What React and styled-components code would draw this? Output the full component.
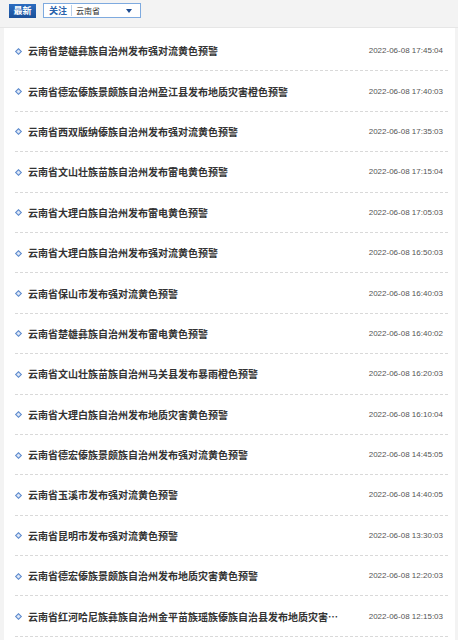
import React from "react";
import styled, { createGlobalStyle } from "styled-components";

const GlobalStyle = createGlobalStyle`
  html, body {
    margin: 0;
    padding: 0;
    background: #f3f3f3;
  }
  body {
    font-family: "Noto Sans CJK SC", "Liberation Sans", sans-serif;
  }
`;

const items = [
  ["云南省楚雄彝族自治州发布强对流黄色预警", "17:45:04"],
  ["云南省德宏傣族景颇族自治州盈江县发布地质灾害橙色预警", "17:40:03"],
  ["云南省西双版纳傣族自治州发布强对流黄色预警", "17:35:03"],
  ["云南省文山壮族苗族自治州发布雷电黄色预警", "17:15:04"],
  ["云南省大理白族自治州发布雷电黄色预警", "17:05:03"],
  ["云南省大理白族自治州发布强对流黄色预警", "16:50:03"],
  ["云南省保山市发布强对流黄色预警", "16:40:03"],
  ["云南省楚雄彝族自治州发布雷电黄色预警", "16:40:02"],
  ["云南省文山壮族苗族自治州马关县发布暴雨橙色预警", "16:20:03"],
  ["云南省大理白族自治州发布地质灾害黄色预警", "16:10:04"],
  ["云南省德宏傣族景颇族自治州发布强对流黄色预警", "14:45:05"],
  ["云南省玉溪市发布强对流黄色预警", "14:40:05"],
  ["云南省昆明市发布强对流黄色预警", "13:30:03"],
  ["云南省德宏傣族景颇族自治州发布地质灾害黄色预警", "12:20:03"],
  ["云南省红河哈尼族彝族自治州金平苗族瑶族傣族自治县发布地质灾害橙色预警", "12:15:03"],
];

const App = () => {
  return (
    <React.Fragment>
      <GlobalStyle />
      <Page>
        <Toolbar>
          <NewButton>最新</NewButton>
          <Select>
            <SelectLabel>关注</SelectLabel>
            <SelectValue>云南省</SelectValue>
            <Arrow />
          </Select>
        </Toolbar>
        <Panel>
          <List>
            {items.map(([title, time], i) => (
              <Row key={i}>
                <Bullet />
                <Title title={title}>{title}</Title>
                <Time>2022-06-08 {time}</Time>
              </Row>
            ))}
          </List>
        </Panel>
      </Page>
    </React.Fragment>
  );
};

export default App;

const Page = styled.div`
  width: 458px;
  height: 640px;
  overflow: hidden;
`;

const Toolbar = styled.div`
  height: 28px;
  display: flex;
  align-items: flex-start;
  gap: 7px;
  padding: 4px 0 0 9px;
  box-sizing: border-box;
  border-bottom: 1px solid #e6e6e6;
`;

const NewButton = styled.div`
  width: 27px;
  height: 14px;
  background: linear-gradient(#2b6cc0, #1a4f99);
  color: #fff;
  font-size: 9px;
  font-weight: 700;
  line-height: 14px;
  text-align: center;
`;

const Select = styled.div`
  width: 98px;
  height: 15px;
  margin-top: -1px;
  box-sizing: border-box;
  border: 1px solid #7eaadf;
  background: #fff;
  display: flex;
  align-items: center;
`;

const SelectLabel = styled.div`
  padding: 0 4px 0 5px;
  border-right: 1px solid #b9cfe9;
  color: #2a62ab;
  font-size: 9px;
  font-weight: 700;
  line-height: 11px;
`;

const SelectValue = styled.div`
  flex: 1;
  padding-left: 4px;
  color: #333;
  font-size: 8px;
  line-height: 11px;
`;

const Arrow = styled.div`
  width: 0;
  height: 0;
  margin-right: 8px;
  border-left: 3.5px solid transparent;
  border-right: 3.5px solid transparent;
  border-top: 4px solid #1d4c91;
`;

const Panel = styled.div`
  margin: 0 3px 0 4px;
  height: 612px;
  background: #fff;
  padding-top: 3px;
`;

const List = styled.div`
  margin: 0 7px 0 11px;
`;

const Row = styled.div`
  height: 40.4px;
  box-sizing: border-box;
  border-bottom: 1px dashed #d9d9d9;
  display: flex;
  align-items: center;
  padding-right: 5px;
`;

const Bullet = styled.div`
  width: 3px;
  height: 3px;
  margin: 1px 7px 0 1px;
  border: 1.5px solid #5b88cc;
  background: #dfe8f7;
  transform: rotate(45deg);
  flex-shrink: 0;
`;

const Title = styled.div`
  flex: 1;
  min-width: 0;
  max-width: 312px;
  margin-right: auto;
  color: #333;
  font-size: 10px;
  font-weight: 700;
  white-space: nowrap;
  overflow: hidden;
  text-overflow: ellipsis;
`;

const Time = styled.div`
  flex-shrink: 0;
  margin-left: 20px;
  color: #555;
  font-family: "Liberation Sans", sans-serif;
  font-size: 8px;
`;
